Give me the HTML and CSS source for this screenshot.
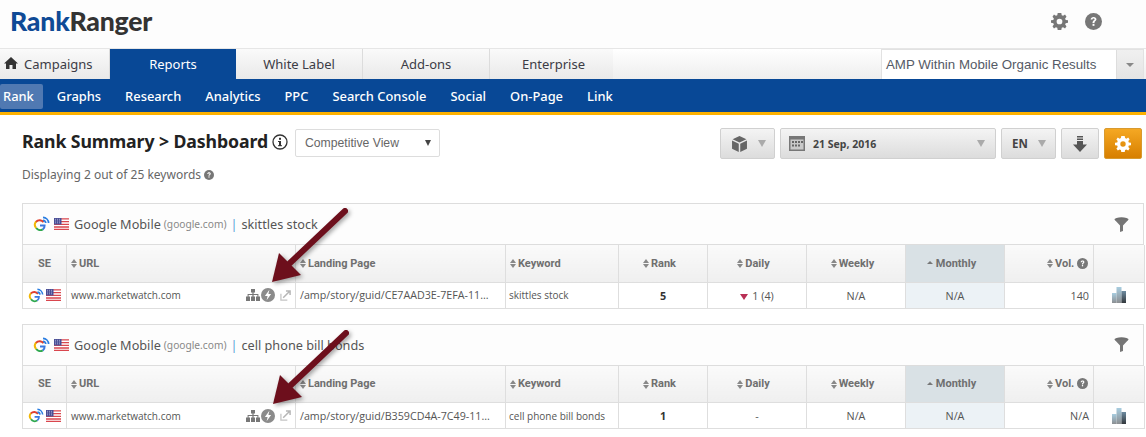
FILE: index.html
```html
<!DOCTYPE html>
<html lang="en">
<head>
<meta charset="utf-8">
<title>Rank Ranger</title>
<link rel="stylesheet" href="styles.css">
</head>
<body>
<svg class="defs" width="0" height="0" aria-hidden="true">
  <defs>
    <symbol id="gicon" viewBox="0 0 17 16">
      <path d="M10.6 6.2A5 5 0 1 0 11 11.6" fill="none" stroke="#e0402f" stroke-width="2" stroke-dasharray="9 30"/>
      <path d="M3 5.6A5 5 0 0 0 3.2 12" fill="none" stroke="#f2b705" stroke-width="2"/>
      <path d="M3.2 12A5 5 0 0 0 9.8 13.4" fill="none" stroke="#2fa84f" stroke-width="2"/>
      <path d="M7 9.4H11.6A4.6 4.6 0 0 1 9.8 13.4" fill="none" stroke="#3a78e0" stroke-width="2"/>
      <path d="M10 1.4A6 6 0 0 1 15.6 7M10 4.4A3 3 0 0 1 12.8 7" fill="none" stroke="#2a7de1" stroke-width="1.7"/>
    </symbol>
    <symbol id="flag" viewBox="0 0 15 12">
      <rect width="15" height="12" fill="#fff"/>
      <path d="M0 .9H15M0 3.6H15M0 6.3H15M0 9H15M0 11.4H15" stroke="#d9464e" stroke-width="1.3"/>
      <rect width="7.5" height="6.5" fill="#4a4f96"/>
      <path d="M1 1.3H7M1 3H7M1 4.8H7" stroke="#c9cbe6" stroke-width=".7" stroke-dasharray="1 1"/>
    </symbol>
    <symbol id="sitemap" viewBox="0 0 14 12">
      <path d="M5 0H9V3.5H7.6V5H12.4V7.5H14V12H10V7.5H11.4V6H7.6V7.5H9V12H5V7.5H6.4V6H2.6V7.5H4V12H0V7.5H1.6V5H6.4V3.5H5Z" fill="#777"/>
    </symbol>
    <symbol id="bolt" viewBox="0 0 14 14">
      <circle cx="7" cy="7" r="7" fill="#8b8b8b"/>
      <path d="M8.4 1.8 3.9 8H6.6L5.6 12.2 10.1 6H7.4Z" fill="#fff"/>
    </symbol>
    <symbol id="ext" viewBox="0 0 12 12">
      <path d="M1 4V11H8" fill="none" stroke="#c4c4c4" stroke-width="1.4"/>
      <path d="M3.5 8.5 10 2M6.5 1H11V5.500" fill="none" stroke="#b5b5b5" stroke-width="1.6"/>
    </symbol>
    <symbol id="bars" viewBox="0 0 16 16">
      <defs>
        <linearGradient id="bar1" x1="0" y1="0" x2="0" y2="1"><stop offset="0" stop-color="#a8cde0"/><stop offset="1" stop-color="#8c8f92"/></linearGradient>
        <linearGradient id="bar2" x1="0" y1="0" x2="0" y2="1"><stop offset="0" stop-color="#6d8ba0"/><stop offset="1" stop-color="#33383c"/></linearGradient>
      </defs>
      <rect x="1" y="6" width="4.500" height="10" fill="url(#bar1)"/>
      <rect x="5.500" y="0" width="5" height="16" fill="url(#bar1)"/>
      <rect x="10.500" y="4" width="4.500" height="12" fill="url(#bar2)"/>
    </symbol>
    <symbol id="funnel" viewBox="0 0 14 14">
      <ellipse cx="7" cy="2.200" rx="6.600" ry="1.900" fill="#6f6f6f"/>
      <path d="M.6 2.600 5.600 8V14L8.400 13V8L13.400 2.600Z" fill="#777"/>
    </symbol>
    <symbol id="q" viewBox="0 0 16 16">
      <circle cx="8" cy="8" r="8" fill="currentColor"/>
      <path d="M5.300 6.200C5.400 4.500 6.600 3.700 8.100 3.700 9.700 3.700 10.800 4.600 10.800 5.900 10.800 7.700 8.900 7.600 8.900 9.300H7.100C7.100 7 9 7 9 5.900 9 5.400 8.600 5.100 8 5.100 7.400 5.100 7 5.500 7 6.200Z" fill="#fff"/>
      <rect x="7.100" y="10.200" width="1.800" height="1.900" fill="#fff"/>
    </symbol>
    <symbol id="gear" viewBox="0 0 16 16">
      <path fill="currentColor" fill-rule="evenodd" d="M6.300 0H9.700L10.100 2.100 11.400 2.700 13.200 1.500 14.600 3.600 13.300 5.100 13.800 6.500 16 6.800V9.200L13.800 9.600 13.300 10.900 14.600 12.500 13.200 14.500 11.400 13.400 10.100 13.900 9.700 16H6.300L5.900 13.900 4.600 13.400 2.800 14.500 1.400 12.500 2.700 10.900 2.200 9.600 0 9.200V6.800L2.200 6.500 2.700 5.100 1.400 3.600 2.800 1.500 4.600 2.700 5.900 2.100ZM8 5.300A2.700 2.700 0 1 0 8 10.700 2.700 2.700 0 1 0 8 5.300Z"/>
    </symbol>
  </defs>
</svg>

<header class="brandbar">
  <div class="logo"><span class="logo-rank">Rank</span><span class="logo-ranger">Ranger</span></div>
  <div class="brand-icons">
    <svg class="ico-top"><use href="#gear"/></svg>
    <svg class="ico-top"><use href="#q"/></svg>
  </div>
</header>

<nav class="tabs">
  <div class="tablist">
    <a class="tab tab-camp"><svg class="home" viewBox="0 0 14 12"><path d="M7 0 14 6.500H12V12H8.500V8H5.500V12H2V6.500H0Z" fill="#333"/></svg>Campaigns</a>
    <a class="tab tab-reports">Reports</a>
    <a class="tab tab-wl">White Label</a>
    <a class="tab tab-add">Add-ons</a>
    <a class="tab tab-ent">Enterprise</a>
  </div>
  <div class="campaign-select">
    <span class="campaign-name">AMP Within Mobile Organic Results</span>
    <span class="campaign-arrow"></span>
  </div>
</nav>

<nav class="subnav">
  <div class="sublist">
    <a class="sub sub-active">Rank</a>
    <a class="sub">Graphs</a>
    <a class="sub">Research</a>
    <a class="sub">Analytics</a>
    <a class="sub">PPC</a>
    <a class="sub">Search Console</a>
    <a class="sub">Social</a>
    <a class="sub">On-Page</a>
    <a class="sub">Links</a>
  </div>
</nav>

<main class="content">
  <div class="toolbar">
    <div class="title-block">
      <div class="title-row">
        <h1 class="title">Rank Summary &gt; Dashboard</h1>
        <svg class="info" viewBox="0 0 16 16"><circle cx="8" cy="8" r="7" fill="none" stroke="#333" stroke-width="1.300"/><rect x="7" y="7" width="2" height="5" fill="#333"/><rect x="7" y="3.800" width="2" height="2" fill="#333"/><rect x="6" y="7" width="2" height="1" fill="#333"/><rect x="6" y="11.200" width="4" height="1" fill="#333"/></svg>
        <div class="view-select"><span>Competitive View</span><i class="caret-dark"></i></div>
      </div>
      <p class="displaying">Displaying 2 out of 25 keywords <svg class="q-small"><use href="#q"/></svg></p>
    </div>
    <div class="actions">
      <button class="btn btn-cube"><svg class="cube" viewBox="0 0 14 15"><path d="M7 0 13.500 3 7 6 .5 3ZM0 4.200 6.300 7.200V15L0 12ZM14 4.200V12L7.700 15V7.200Z" fill="#666"/></svg><i class="caret"></i></button>
      <button class="btn btn-date"><svg class="cal" viewBox="0 0 16 15"><rect width="16" height="15" fill="#777"/><rect x="1.500" y="3.500" width="13" height="10" fill="#c9c9c9"/><path d="M3 5H5V7H3ZM6 5H8V7H6ZM9 5H11V7H9ZM12 5H14V7H12ZM3 8.500H5V10.500H3ZM6 8.500H8V10.500H6ZM9 8.500H11V10.500H9Z" fill="#666"/></svg><span class="date-text">21 Sep, 2016</span><i class="caret"></i></button>
      <button class="btn btn-lang"><span class="lang-text">EN</span><i class="caret"></i></button>
      <button class="btn btn-dl"><svg class="dl" viewBox="0 0 14 16"><path d="M4 0H10V1.500H4ZM4 2.500H10V4H4ZM4 5H10V8.500H14L7 16 0 8.500H4Z" fill="#555"/></svg></button>
      <button class="btn btn-gear"><svg class="gear-white"><use href="#gear"/></svg></button>
    </div>
  </div>

  <section class="panel panel-first">
    <div class="panel-head">
      <svg class="g-head"><use href="#gicon"/></svg>
      <svg class="flag-head"><use href="#flag"/></svg>
      <span class="engine">Google Mobile</span>
      <span class="domain">(google.com)</span>
      <span class="sep">|</span>
      <span class="kw">skittles stock</span>
      <svg class="funnel"><use href="#funnel"/></svg>
    </div>
    <table class="grid">
      <colgroup><col class="c-se"><col class="c-url"><col class="c-lp"><col class="c-kw"><col class="c-rank"><col class="c-daily"><col class="c-weekly"><col class="c-monthly"><col class="c-vol"><col class="c-chart"></colgroup>
      <thead>
        <tr>
          <th class="even">SE</th>
          <th class="left"><i class="sort"></i>URL</th>
          <th class="left"><i class="sort"></i>Landing Page</th>
          <th class="left"><i class="sort"></i>Keyword</th>
          <th><i class="sort"></i>Rank</th>
          <th><i class="sort"></i>Daily</th>
          <th><i class="sort"></i>Weekly</th>
          <th class="sorted"><i class="sort-up"></i>Monthly</th>
          <th class="th-right"><i class="sort"></i>Vol. <svg class="q-th"><use href="#q"/></svg></th>
          <th class="even"></th>
        </tr>
      </thead>
      <tbody>
        <tr>
          <td class="se"><svg class="g-row"><use href="#gicon"/></svg><svg class="flag-row"><use href="#flag"/></svg></td>
          <td class="left"><div class="urlcell"><span>www.marketwatch.com</span><span class="urlicons"><svg class="i-site"><use href="#sitemap"/></svg><svg class="i-bolt"><use href="#bolt"/></svg><svg class="i-ext"><use href="#ext"/></svg></span></div></td>
          <td class="left lp">/amp/story/guid/CE7AAD3E-7EFA-11...</td>
          <td class="left kwcell">skittles stock</td>
          <td class="rank">5</td>
          <td class="num"><i class="down"></i>1 (4)</td>
          <td class="num">N/A</td>
          <td class="num sorted-cell">N/A</td>
          <td class="num right">140</td>
          <td><svg class="i-bars"><use href="#bars"/></svg></td>
        </tr>
      </tbody>
    </table>
  </section>

  <section class="panel">
    <div class="panel-head">
      <svg class="g-head"><use href="#gicon"/></svg>
      <svg class="flag-head"><use href="#flag"/></svg>
      <span class="engine">Google Mobile</span>
      <span class="domain">(google.com)</span>
      <span class="sep">|</span>
      <span class="kw">cell phone bill bonds</span>
      <svg class="funnel"><use href="#funnel"/></svg>
    </div>
    <table class="grid">
      <colgroup><col class="c-se"><col class="c-url"><col class="c-lp"><col class="c-kw"><col class="c-rank"><col class="c-daily"><col class="c-weekly"><col class="c-monthly"><col class="c-vol"><col class="c-chart"></colgroup>
      <thead>
        <tr>
          <th class="even">SE</th>
          <th class="left"><i class="sort"></i>URL</th>
          <th class="left"><i class="sort"></i>Landing Page</th>
          <th class="left"><i class="sort"></i>Keyword</th>
          <th><i class="sort"></i>Rank</th>
          <th><i class="sort"></i>Daily</th>
          <th><i class="sort"></i>Weekly</th>
          <th class="sorted"><i class="sort-up"></i>Monthly</th>
          <th class="th-right"><i class="sort"></i>Vol. <svg class="q-th"><use href="#q"/></svg></th>
          <th class="even"></th>
        </tr>
      </thead>
      <tbody>
        <tr>
          <td class="se"><svg class="g-row"><use href="#gicon"/></svg><svg class="flag-row"><use href="#flag"/></svg></td>
          <td class="left"><div class="urlcell"><span>www.marketwatch.com</span><span class="urlicons"><svg class="i-site"><use href="#sitemap"/></svg><svg class="i-bolt"><use href="#bolt"/></svg><svg class="i-ext"><use href="#ext"/></svg></span></div></td>
          <td class="left lp">/amp/story/guid/B359CD4A-7C49-11...</td>
          <td class="left kwcell">cell phone bill bonds</td>
          <td class="rank">1</td>
          <td class="num">-</td>
          <td class="num">N/A</td>
          <td class="num sorted-cell">N/A</td>
          <td class="num right">N/A</td>
          <td><svg class="i-bars"><use href="#bars"/></svg></td>
        </tr>
      </tbody>
    </table>
  </section>
</main>

<svg class="arrow arrow-one" viewBox="0 0 90 90"><path d="M76 6 21 58" stroke="#6d0f1c" stroke-width="6" stroke-linecap="round" fill="none"/><path d="M3 77 10 48 32 70Z" fill="#6d0f1c"/></svg>
<svg class="arrow arrow-two" viewBox="0 0 90 90"><path d="M76 6 21 58" stroke="#6d0f1c" stroke-width="6" stroke-linecap="round" fill="none"/><path d="M3 77 10 48 32 70Z" fill="#6d0f1c"/></svg>
</body>
</html>
```

FILE: styles.css
```css
* { box-sizing: border-box; }
html, body { margin: 0; padding: 0; }
body {
  width: 1146px;
  height: 437px;
  overflow: hidden;
  position: relative;
  background: #fff;
  font-family: "Open Sans", "Liberation Sans", sans-serif;
  color: #444;
}
.defs { position: absolute; }

/* brand bar */
.brandbar {
  height: 48px;
  background: #fdfdfd;
  display: flex;
  align-items: center;
  justify-content: space-between;
  padding: 0 44px 6px 10px;
}
.logo {
  font-family: "Lato", sans-serif;
  font-weight: 900;
  font-size: 26.6px;
  letter-spacing: -0.2px;
  line-height: 1;
}
.logo-rank { color: #0f4a96; }
.logo-ranger { color: #333; }
.brand-icons { display: flex; gap: 17px; color: #777; }
.ico-top { width: 17px; height: 17px; display: block; }

/* tabs */
.tabs {
  height: 31px;
  display: flex;
  justify-content: space-between;
  background: linear-gradient(#fff, #eee);
  border-top: 1px solid #e6e6e6;
  padding-right: 2px;
}
.tablist { display: flex; }
.tab {
  font-family: "Noto Sans", sans-serif;
  font-size: 13px;
  line-height: 30px;
  color: #3c3c46;
  text-align: center;
  background: linear-gradient(#fafafa, #e9e9e9);
  border-right: 1px solid #dcdcdc;
  display: block;
}
.tab-camp { width: 110px; text-align: left; padding-left: 4px; }
.tab-reports { width: 126px; background: #084896; color: #fff; border-right: 0; }
.tab-wl { width: 127px; }
.tab-add { width: 127px; }
.tab-ent { width: 123px; border-right: 0; padding-left: 4px; }
.home { width: 14px; height: 12px; margin-right: 6px; }
.campaign-select {
  width: 263px;
  display: flex;
  border: 1px solid #e2e2e2;
  border-bottom: 0;
  background: #fff;
}
.campaign-name {
  flex: 1;
  font-family: "Liberation Sans", sans-serif;
  font-size: 13.3px;
  line-height: 30px;
  padding-left: 4px;
  color: #555a66;
}
.campaign-arrow {
  width: 27px;
  background: linear-gradient(#f0f0f0, #e4e4e4);
  border-left: 1px solid #ddd;
  position: relative;
}
.campaign-arrow::after {
  content: "";
  position: absolute;
  left: 9px;
  top: 13px;
  border: 4px solid transparent;
  border-top-color: #888;
  border-left-width: 4px;
}

/* sub nav */
.subnav {
  height: 36px;
  background: #084896;
  border-bottom: 3px solid #fdb100;
}
.sublist {
  width: 613px;
  height: 33px;
  overflow: hidden;
  display: flex;
  align-items: center;
  padding-top: 1px;
}
.sub {
  font-family: "Noto Sans", sans-serif;
  font-weight: 500;
  font-size: 12.9px;
  color: #fff;
  margin-right: 24px;
  white-space: nowrap;
}
.sub-active {
  background: #5079b2;
  padding: 0 9px 0 3px;
  margin-right: 14px;
  line-height: 25px;
  border-radius: 2px;
}

/* content */
.content { padding: 0 3px 0 22px; }
.toolbar {
  height: 88px;
  display: flex;
  justify-content: space-between;
}
.title-row {
  display: flex;
  align-items: center;
  margin-top: 14px;
  height: 28px;
}
.title {
  margin: 0 0 4px;
  font-family: "Noto Sans", sans-serif;
  font-size: 17.7px;
  font-weight: 700;
  color: #222;
  letter-spacing: -0.1px;
  white-space: nowrap;
}
.info { width: 16px; height: 16px; margin-left: 4px; margin-bottom: 3px; }
.view-select {
  margin-left: 7px;
  width: 145px;
  height: 28px;
  border: 1px solid #ddd;
  border-radius: 2px;
  display: flex;
  align-items: center;
  justify-content: space-between;
  padding: 0 8px 0 9px;
  font-family: "Liberation Sans", sans-serif;
  font-size: 12.2px;
  color: #666;
}
.caret-dark {
  border: 3.500px solid transparent;
  border-top: 6px solid #444;
  border-bottom: 0;
}
.displaying {
  margin: 9px 0 0;
  font-family: "Noto Sans", sans-serif;
  font-size: 12px;
  color: #666;
  display: flex;
  align-items: center;
  white-space: pre;
}
.q-small { width: 10px; height: 10px; color: #777; }
.actions {
  display: flex;
  gap: 5px;
  padding-top: 13px;
  margin-right: 1px;
  height: 50px;
}
.btn {
  height: 31px;
  margin: 0;
  padding: 0;
  border: 1px solid #d0d0d0;
  border-radius: 2px;
  background: linear-gradient(#f4f4f4, #dcdcdc);
  display: flex;
  align-items: center;
  font-family: "Noto Sans", sans-serif;
}
.caret {
  border: 4px solid transparent;
  border-top: 7px solid #aaa;
  border-bottom: 0;
}
.btn-cube { width: 55px; padding-left: 11px; gap: 11px; }
.cube { width: 15px; height: 16px; }
.btn-date { width: 216px; padding-left: 8px; }
.cal { width: 16px; height: 15px; }
.date-text { font-size: 10.500px; font-weight: 700; color: #444; margin-left: 8px; flex: 1; text-align: left; }
.btn-date .caret { margin-right: 10px; }
.btn-lang { width: 55px; padding-left: 10px; gap: 10px; }
.lang-text { font-size: 11.500px; font-weight: 700; color: #444; }
.btn-dl { width: 38px; justify-content: center; }
.dl { width: 14px; height: 16px; }
.btn-gear {
  width: 38px;
  justify-content: center;
  background: linear-gradient(#f5a823, #d77f00);
  border-color: #d89a30;
  color: #fff;
}
.gear-white { width: 16px; height: 16px; }

/* panels */
.panel { margin-bottom: 15px; width: 1122px; }
.panel-head {
  height: 42px;
  border: 1px solid #ddd;
  background: #fdfdfd;
  display: flex;
  align-items: center;
  padding: 0 14px 0 10px;
  font-family: "Noto Sans", sans-serif;
  font-size: 12.7px;
  color: #555;
}
.g-head { width: 17px; height: 16px; margin-right: 4px; }
.flag-head { width: 15px; height: 12px; margin-right: 5px; }
.domain { font-size: 10.2px; color: #888; margin-left: 3px; }
.sep { color: #5a9fd8; margin: 0 4px; }
.funnel { width: 15px; height: 15px; margin-left: auto; }

.grid {
  width: 1122px;
  table-layout: fixed;
  border-collapse: collapse;
  font-family: "Open Sans", sans-serif;
  font-size: 10px;
  color: #555;
}
.c-se { width: 44px; }
.c-url { width: 229px; }
.c-lp { width: 210px; }
.c-kw { width: 113px; }
.c-rank { width: 89px; }
.c-daily { width: 99px; }
.c-weekly { width: 99px; }
.c-monthly { width: 99px; }
.c-vol { width: 89px; }
.c-chart { width: 51px; }

.grid th {
  height: 37px;
  padding: 0 7px 0 0;
  border: 1px solid #dedede;
  border-top: 0;
  background: linear-gradient(#fafafa, #efefef);
  font-family: "Roboto", sans-serif;
  font-size: 11px;
  font-weight: 700;
  color: #6f6f6f;
  text-align: center;
  white-space: nowrap;
}
.grid td {
  height: 26px;
  padding: 0 3px;
  border: 1px solid #dedede;
  text-align: center;
  white-space: nowrap;
  overflow: hidden;
}
.grid th.even { padding: 0; }
.grid th.left { text-align: left; padding: 0 0 0 4px; }
.grid th.th-right { text-align: right; padding: 0 5px 0 0; }
.grid td.left { text-align: left; padding-left: 4px; }
.grid td.kwcell { padding-left: 3px; }
.grid td.right { text-align: right; padding-right: 4px; }
.grid .rank { font-weight: 700; font-size: 10.8px; color: #333; }
.grid .num { font-size: 10.8px; }
.grid .lp { font-size: 10.7px; }
.grid .sorted { background: #d9e1e5; }
.grid .sorted-cell { background: #ecf2f6; }
.se { font-size: 0; }
.g-row { width: 16px; height: 15px; vertical-align: middle; }
.flag-row { width: 15px; height: 12px; vertical-align: middle; margin-left: 2px; }
.urlcell { display: flex; justify-content: space-between; align-items: center; }
.urlicons { display: flex; align-items: center; }
.i-site { width: 14px; height: 12px; }
.i-bolt { width: 14px; height: 14px; margin-left: 1px; }
.i-ext { width: 11px; height: 11px; margin-left: 5px; margin-right: 1px; }
.i-bars { width: 16px; height: 16px; vertical-align: middle; }
.sort {
  display: inline-flex;
  flex-direction: column;
  gap: 1px;
  margin-right: 2px;
  vertical-align: middle;
}
.sort::before {
  content: "";
  border: 3px solid transparent;
  border-bottom: 4px solid #888;
  border-top: 0;
}
.sort::after {
  content: "";
  border: 3px solid transparent;
  border-top: 4px solid #888;
  border-bottom: 0;
}
.sort-up {
  display: inline-block;
  margin: 0 3px 2px 0;
  vertical-align: middle;
  border: 3px solid transparent;
  border-bottom: 3px solid #777;
  border-top: 0;
}
.down {
  display: inline-block;
  margin-right: 4px;
  border: 4px solid transparent;
  border-top: 6px solid #b92f55;
  border-bottom: 0;
}
.q-th { width: 11px; height: 11px; color: #777; vertical-align: -2px; }

/* annotation arrows */
.arrow {
  position: absolute;
  width: 90px;
  height: 90px;
  filter: drop-shadow(2px 2px 2px rgba(0,0,0,.35));
}
.arrow-one { left: 269px; top: 205px; }
.arrow-two { left: 270px; top: 327px; }
```
